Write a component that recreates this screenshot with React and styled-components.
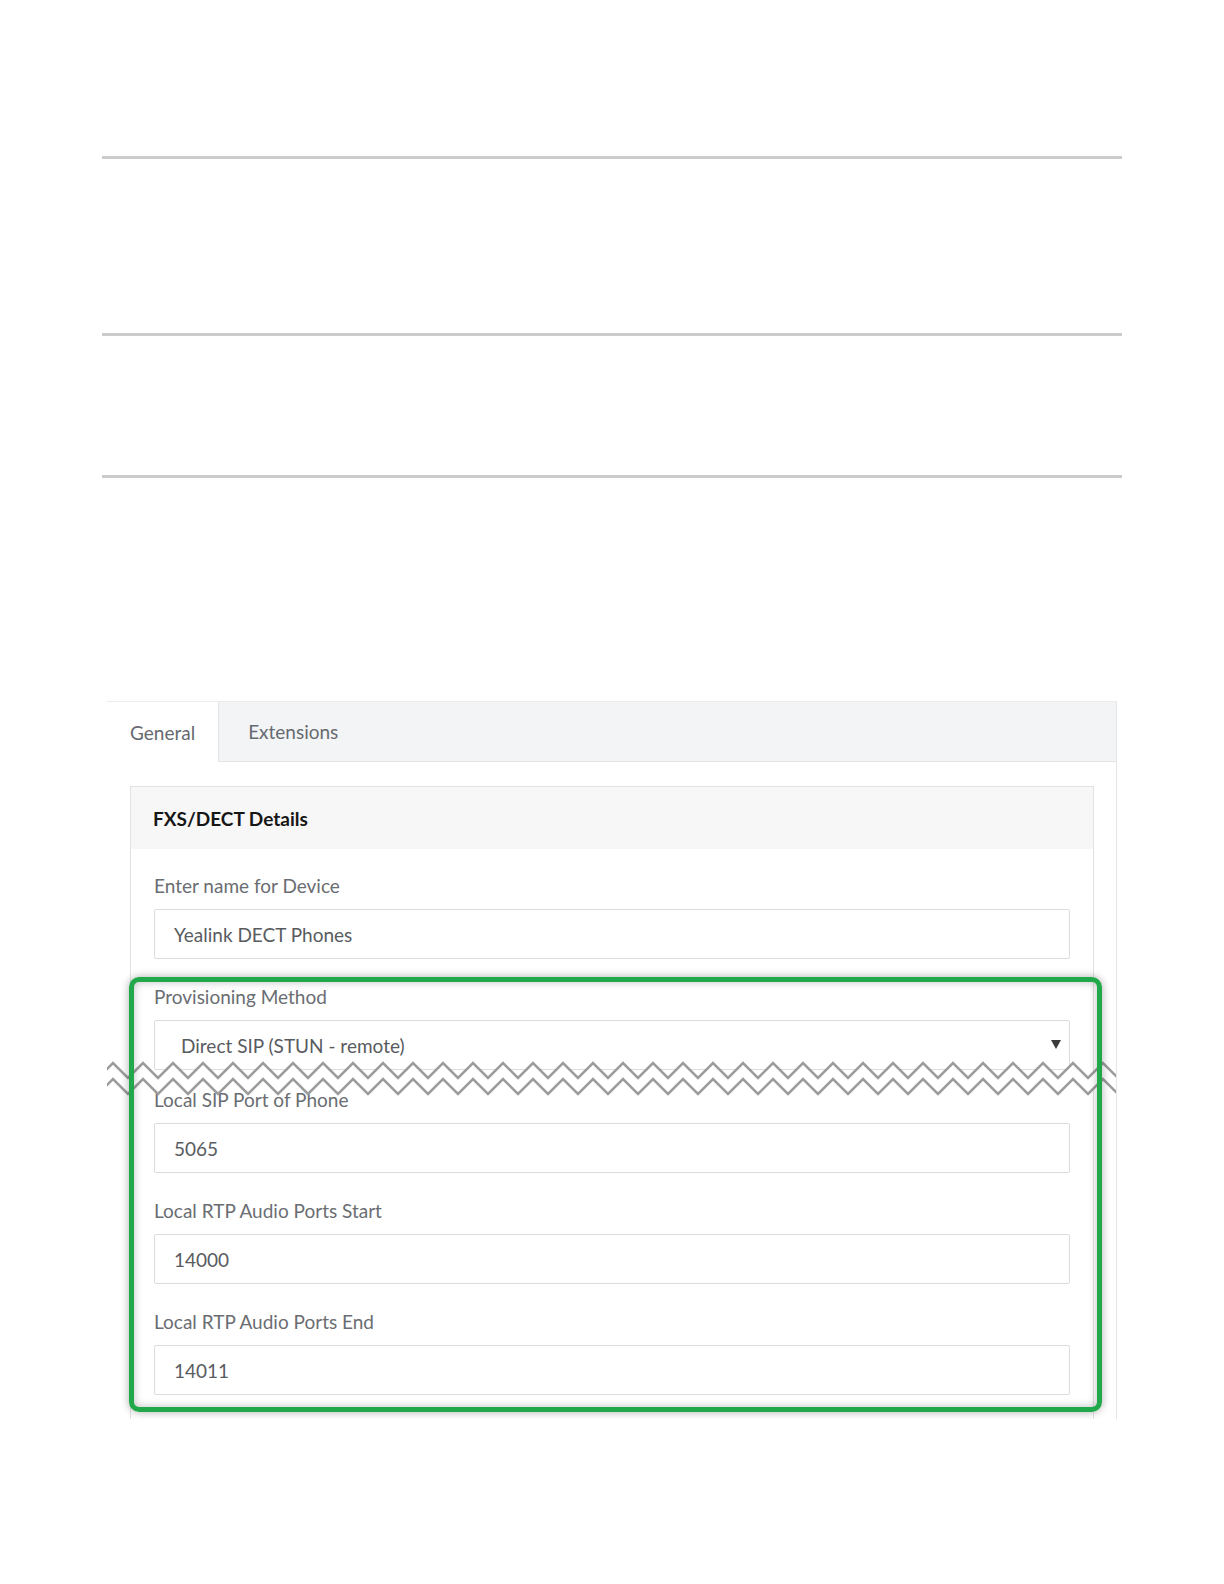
import React from 'react';
import styled, { createGlobalStyle } from 'styled-components';

const GlobalStyle = createGlobalStyle`
  body {
    margin: 0;
    background: #fff;
    font-family: Lato, "Open Sans", Arial, sans-serif;
  }
`;

const Page = styled.div`
  width: 1224px;
  padding-top: 156px;
  padding-bottom: 164px;
`;

const Rule = styled.hr`
  width: 1020px;
  height: 3px;
  margin: 0 auto ${({ $after }) => $after}px;
  border: 0;
  background: #cbcbcb;
`;

const Panel = styled.div`
  position: relative;
  width: 1010px;
  height: 718px;
  margin: 0 auto;
  overflow: hidden;
  border-right: 1px solid #e4e4e4;
  box-sizing: border-box;
`;

const TabBar = styled.div`
  display: flex;
  height: 61px;
  background: #f3f4f6;
  border-top: 1px solid #ececec;
  border-bottom: 1px solid #e4e4e4;
  box-sizing: border-box;
`;

const Tab = styled.div`
  display: flex;
  align-items: center;
  padding: 0 ${({ $pad }) => $pad}px;
  font-size: 19px;
  color: #666a70;
  background: ${({ $active }) => ($active ? '#fff' : 'transparent')};
  border-right: ${({ $active }) => ($active ? '1px solid #e4e4e4' : 'none')};
  margin-bottom: ${({ $active }) => ($active ? '-1px' : '0')};
`;

const TabBody = styled.div`
  padding: 24px 22px 0 23px;
`;

const Card = styled.div`
  border: 1px solid #e2e2e2;
  border-bottom: 0;
  background: #fff;
`;

const CardHeader = styled.div`
  display: flex;
  align-items: center;
  height: 62px;
  padding: 0 22px;
  background: #f7f7f7;
  font-size: 19px;
  font-weight: 700;
  color: #161616;
`;

const CardBody = styled.div`
  padding: 25px 23px 40px;
`;

const Group = styled.div`
  position: relative;
`;

const Field = styled.div`
  position: relative;
  margin-bottom: ${({ $gap }) => $gap ?? 26}px;
`;

const Label = styled.div`
  font-size: 19px;
  line-height: 24px;
  color: #6a6d72;
  margin-bottom: 11px;
`;

const Input = styled.div`
  display: flex;
  align-items: center;
  justify-content: space-between;
  height: 50px;
  padding: 0 8px 0 ${({ $indent }) => $indent}px;
  border: 1px solid #dcdcdc;
  border-radius: 2px;
  box-sizing: border-box;
  font-size: 19px;
  color: #585b60;
`;

const Caret = styled.span`
  width: 0;
  height: 0;
  margin-top: -2px;
  border-left: 5px solid transparent;
  border-right: 5px solid transparent;
  border-top: 9px solid #3a3a3a;
`;

const Highlight = styled.div`
  position: absolute;
  left: -25px;
  right: -32px;
  top: -8px;
  bottom: -17px;
  border: 5px solid #21a84a;
  border-radius: 10px;
  box-shadow: 0 0 9px rgba(0, 0, 0, 0.32), inset 0 0 9px rgba(0, 0, 0, 0.26);
  pointer-events: none;
`;

const Break = styled.svg`
  position: absolute;
  left: -46px;
  top: 76px;
  width: 1010px;
  height: 36px;
  overflow: visible;
`;

function zigzag(offset) {
  const pts = [];
  for (let i = 0; i <= 70; i++) {
    const x = -10 + i * 15;
    const y = (i % 2 === 0 ? 17 : 2) + offset;
    pts.push([x, y]);
  }
  return pts;
}

const ZigzagBreak = () => {
  const top = zigzag(0);
  const low = zigzag(16);
  const toStr = (p) => p.map(([x, y]) => `${x},${y}`).join(' ');
  const fill = toStr(top) + ' ' + toStr([...low].reverse());
  return (
    <Break viewBox="0 0 1010 36">
      <polygon points={fill} fill="#fff" />
      <polyline points={toStr(top)} fill="none" stroke="#9c9c9c" strokeWidth="2.5" />
      <polyline points={toStr(low)} fill="none" stroke="#9c9c9c" strokeWidth="2.5" />
    </Break>
  );
};

const fields = [
  { label: 'Local SIP Port of Phone', value: '5065' },
  { label: 'Local RTP Audio Ports Start', value: '14000' },
  { label: 'Local RTP Audio Ports End', value: '14011' },
];

export default function App() {
  return (
    <Page>
      <GlobalStyle />
      <Rule $after={174} />
      <Rule $after={139} />
      <Rule $after={223} />
      <Panel>
        <TabBar>
          <Tab $active $pad={23}>General</Tab>
          <Tab $pad={29}>Extensions</Tab>
        </TabBar>
        <TabBody>
          <Card>
            <CardHeader>FXS/DECT Details</CardHeader>
            <CardBody>
              <Field>
                <Label>Enter name for Device</Label>
                <Input $indent={19}>Yealink DECT Phones</Input>
              </Field>
              <Group>
                <Field $gap={18}>
                  <Label>Provisioning Method</Label>
                  <Input $indent={26}>
                    Direct SIP (STUN - remote)
                    <Caret />
                  </Input>
                </Field>
                {fields.map((f, i) => (
                  <Field key={f.label} $gap={i === fields.length - 1 ? 0 : 26}>
                    <Label>{f.label}</Label>
                    <Input $indent={19}>{f.value}</Input>
                  </Field>
                ))}
                <ZigzagBreak />
                <Highlight />
              </Group>
            </CardBody>
          </Card>
        </TabBody>
      </Panel>
    </Page>
  );
}
